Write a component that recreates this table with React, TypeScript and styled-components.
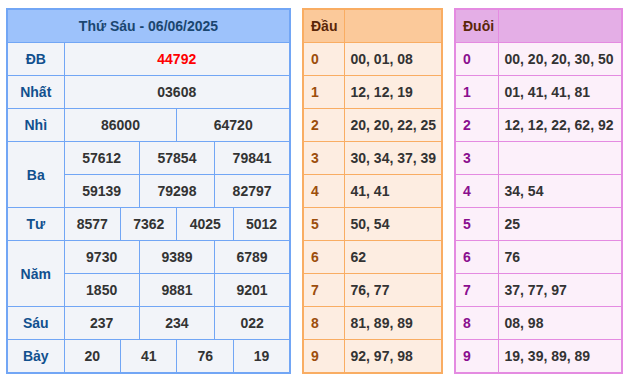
import React from "react";
import styled, { createGlobalStyle } from "styled-components";

const Global = createGlobalStyle`
  html, body { margin: 0; padding: 0; background: #ffffff; }
  body { font-family: "Liberation Sans", Arial, sans-serif; }
`;

const Page = styled.div`
  display: grid;
  grid-template-columns: 285px 141px 169px;
  column-gap: 11px;
  padding: 8px 0 0 6px;
  align-items: start;
`;

type Theme = { border: string; head: string; body: string };

const Table = styled.table<{ $t: Theme }>`
  border-collapse: collapse;
  table-layout: fixed;
  width: 100%;
  border: 2px solid ${(p) => p.$t.border};
  font-family: "Liberation Sans", Arial, sans-serif;
  font-size: 14px;
  font-weight: bold;
  td, th {
    border: 1px solid ${(p) => p.$t.border};
    height: 32px;
    padding: 0;
    background: ${(p) => p.$t.body};
  }
  th {
    background: ${(p) => p.$t.head};
  }
`;

const TitleCell = styled.th`
  color: #1a4670;
  text-align: center;
  font-size: 14px;
`;

const Label = styled.td`
  color: #11508e;
  text-align: center;
`;

const Num = styled.td<{ $red?: boolean }>`
  color: ${(p) => (p.$red ? "#ff0000" : "#333333")};
  text-align: center;
`;

const SideHead = styled.th`
  color: #5a2608;
  text-align: left;
  padding-left: 7px !important;
`;

const Digit = styled.td<{ $color: string }>`
  color: ${(p) => p.$color};
  text-align: left;
  padding-left: 7px !important;
`;

const List = styled.td`
  color: #333333;
  text-align: left;
  padding-left: 6px !important;
  white-space: nowrap;
`;

const blue: Theme = { border: "#72a6f5", head: "#9dc2fb", body: "#f2f4f9" };
const orange: Theme = { border: "#f9ad63", head: "#fbc99a", body: "#fdede1" };
const pink: Theme = { border: "#e48be1", head: "#e4aee6", body: "#fcf0fa" };

type Prize = { label: string; rows: string[][]; red?: boolean };

const prizes: Prize[] = [
  { label: "ĐB", rows: [["44792"]], red: true },
  { label: "Nhất", rows: [["03608"]] },
  { label: "Nhì", rows: [["86000", "64720"]] },
  { label: "Ba", rows: [["57612", "57854", "79841"], ["59139", "79298", "82797"]] },
  { label: "Tư", rows: [["8577", "7362", "4025", "5012"]] },
  { label: "Năm", rows: [["9730", "9389", "6789"], ["1850", "9881", "9201"]] },
  { label: "Sáu", rows: [["237", "234", "022"]] },
  { label: "Bảy", rows: [["20", "41", "76", "19"]] },
];

const dau = [
  "00, 01, 08",
  "12, 12, 19",
  "20, 20, 22, 25",
  "30, 34, 37, 39",
  "41, 41",
  "50, 54",
  "62",
  "76, 77",
  "81, 89, 89",
  "92, 97, 98",
];

const duoi = [
  "00, 20, 20, 30, 50",
  "01, 41, 41, 81",
  "12, 12, 22, 62, 92",
  "",
  "34, 54",
  "25",
  "76",
  "37, 77, 97",
  "08, 98",
  "19, 39, 89, 89",
];

function ResultTable() {
  return (
    <Table $t={blue}>
      <colgroup>
        <col style={{ width: 57 }} />
        {Array.from({ length: 12 }).map((_, i) => (
          <col key={i} />
        ))}
      </colgroup>
      <thead>
        <tr>
          <TitleCell colSpan={13}>Thứ Sáu - 06/06/2025</TitleCell>
        </tr>
      </thead>
      <tbody>
        {prizes.map((p) =>
          p.rows.map((row, ri) => (
            <tr key={p.label + ri}>
              {ri === 0 && <Label rowSpan={p.rows.length}>{p.label}</Label>}
              {row.map((n, ni) => (
                <Num key={ni} colSpan={12 / row.length} $red={p.red}>
                  {n}
                </Num>
              ))}
            </tr>
          ))
        )}
      </tbody>
    </Table>
  );
}

function SideTable({
  theme,
  title,
  labelWidth,
  digitColor,
  items,
}: {
  theme: Theme;
  title: string;
  labelWidth: number;
  digitColor: string;
  items: string[];
}) {
  return (
    <Table $t={theme}>
      <colgroup>
        <col style={{ width: labelWidth }} />
        <col />
      </colgroup>
      <thead>
        <tr>
          <SideHead>{title}</SideHead>
          <SideHead />
        </tr>
      </thead>
      <tbody>
        {items.map((v, i) => (
          <tr key={i}>
            <Digit $color={digitColor}>{i}</Digit>
            <List>{v}</List>
          </tr>
        ))}
      </tbody>
    </Table>
  );
}

export default function App() {
  return (
    <>
      <Global />
      <Page>
        <ResultTable />
        <SideTable theme={orange} title="Đầu" labelWidth={41} digitColor="#9c4e0c" items={dau} />
        <SideTable theme={pink} title="Đuôi" labelWidth={43} digitColor="#8a0e8e" items={duoi} />
      </Page>
    </>
  );
}
